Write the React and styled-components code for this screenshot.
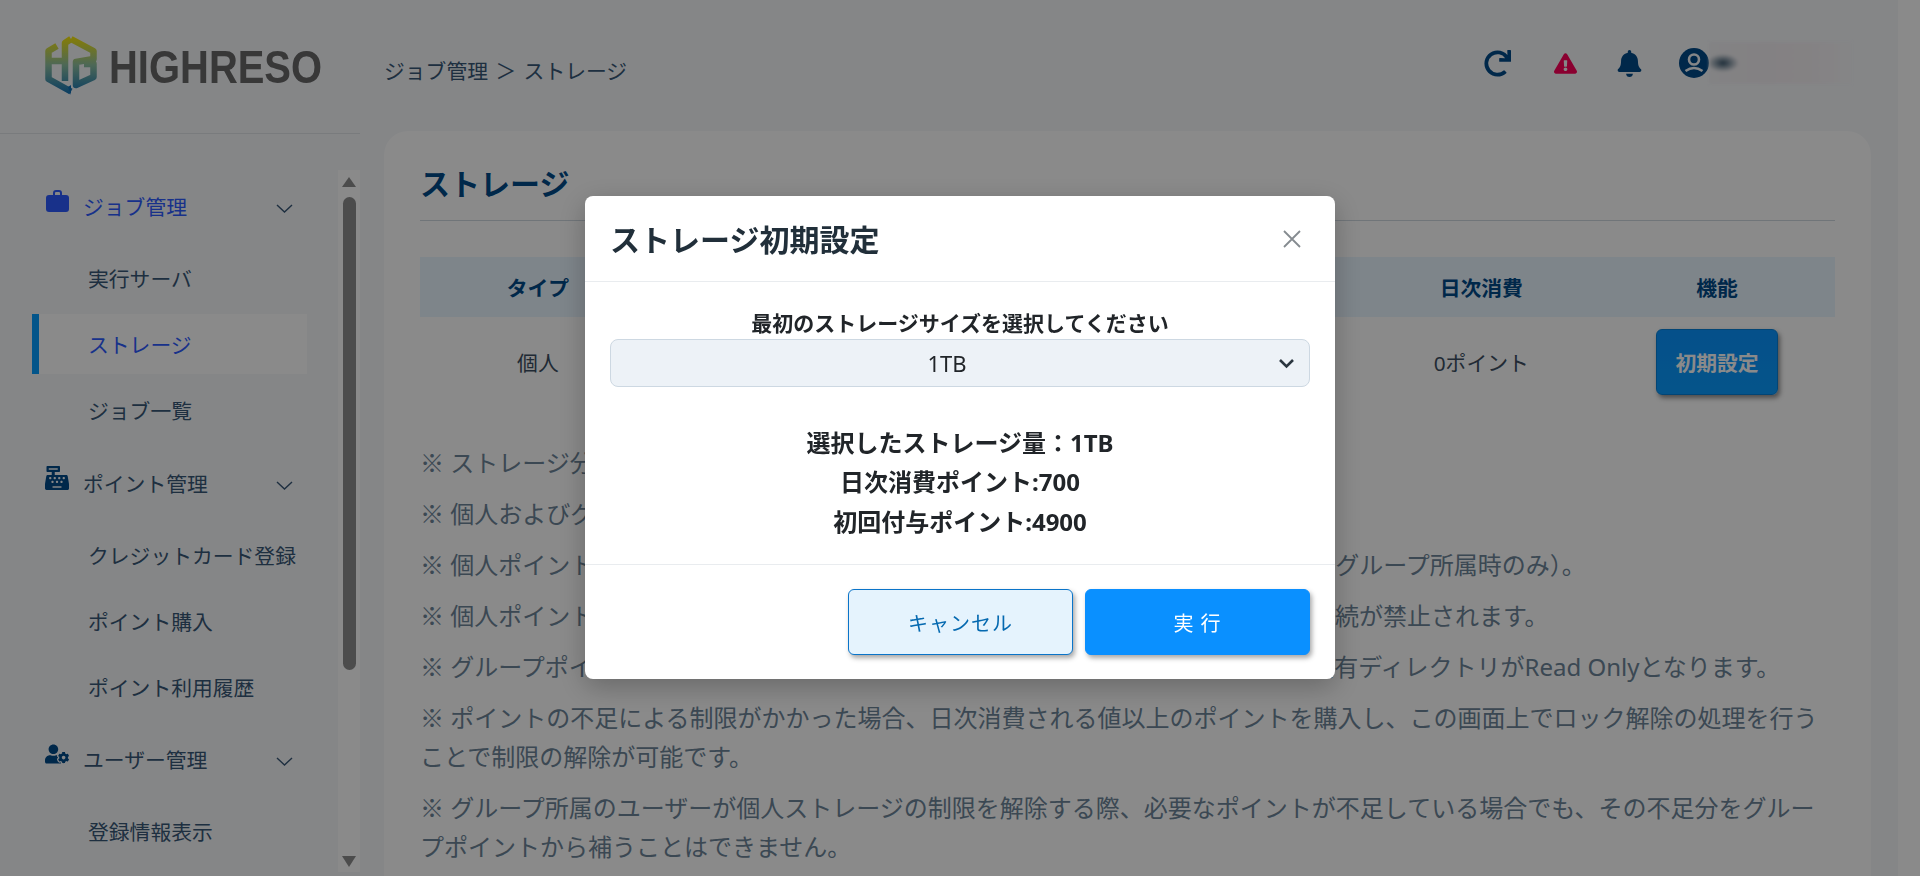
import React from 'react';
import styled, { createGlobalStyle } from 'styled-components';
import { FaRedo, FaExclamationTriangle, FaBell, FaCashRegister, FaUserCog } from 'react-icons/fa';

const GlobalStyle = createGlobalStyle`
  html, body {
    margin: 0;
    height: 100%;
    overflow: hidden;
    background: #f5f7fa;
    font-family: "Noto Sans", "Noto Sans CJK JP", sans-serif;
  }
  * {
    box-sizing: border-box;
  }
`;

const Shell = styled.div`
  display: flex;
  height: 876px;
  overflow: hidden;
`;

const LeftColumn = styled.div`
  display: flex;
  flex-direction: column;
  flex: 0 0 360px;
`;

const LogoBar = styled.div`
  display: flex;
  align-items: center;
  height: 134px;
  padding: 0 0 4px 45px;
  border-bottom: 1px solid #dfe3e8;
`;

const LogoText = styled.span`
  margin: 4px 0 0 12px;
  font-family: "Liberation Sans", sans-serif;
  font-size: 47px;
  font-weight: 700;
  color: #686868;
  transform: scaleX(0.85);
  transform-origin: left center;
`;

const SideBody = styled.div`
  display: flex;
  flex: 1;
  min-height: 0;
`;

const Nav = styled.nav`
  display: flex;
  flex-direction: column;
  flex: 0 0 338px;
  padding-top: 39px;
`;

const GroupRow = styled.div`
  display: flex;
  align-items: center;
  flex: 0 0 66px;
  margin: ${p => p.$top || 0}px 0 6px;
  padding: 0 45px;
  font-size: 20.8px;
  color: ${p => (p.$active ? '#2e5cff' : '#385776')};
`;

const GroupIcon = styled.span`
  display: flex;
  justify-content: center;
  flex: 0 0 24px;
  margin: 0 14px 10px 0;
  font-size: 24px;
  color: ${p => (p.$active ? '#2e5cff' : '#004a89')};
`;

const GroupLabel = styled.span`
  flex: 1;
`;

const Chevron = styled.svg`
  width: 17px;
  height: 9px;
  margin-top: 4px;
  fill: none;
  stroke: #385776;
  stroke-width: 1.4;
`;

const SubItem = styled.div`
  display: flex;
  align-items: center;
  flex: 0 0 60px;
  width: 275px;
  margin: 3px 0 3px 32px;
  padding-left: 49px;
  border-left: 7px solid ${p => (p.$active ? '#079eff' : 'transparent')};
  background: ${p => (p.$active ? '#ffffff' : 'transparent')};
  font-size: 20.8px;
  color: ${p => (p.$active ? '#2e5cff' : '#385776')};
`;

const ScrollTrack = styled.div`
  display: flex;
  flex-direction: column;
  align-items: center;
  flex: 0 0 22px;
  margin: 36px 0 4px;
  background: #ffffff;
`;

const ArrowUp = styled.div`
  margin: 7px 0 10px;
  border-left: 7px solid transparent;
  border-right: 7px solid transparent;
  border-bottom: 10px solid #8d8d8d;
`;

const ArrowDown = styled.div`
  margin: auto 0 5px;
  border-left: 7px solid transparent;
  border-right: 7px solid transparent;
  border-top: 11px solid #8d8d8d;
`;

const ScrollThumb = styled.div`
  width: 13px;
  height: 473px;
  border-radius: 7px;
  background: #8d8d8d;
`;

const RightColumn = styled.div`
  display: flex;
  flex-direction: column;
  flex: 0 0 1538px;
`;

const PageStrip = styled.div`
  flex: 1;
  background: #ffffff;
`;

const TopBar = styled.header`
  display: flex;
  align-items: center;
  flex: 0 0 131px;
  padding: 0 46px 0 24px;
`;

const Breadcrumb = styled.div`
  padding-top: 9px;
  font-size: 20.8px;
  word-spacing: 2px;
  color: #385776;
`;

const TopIcons = styled.div`
  display: flex;
  align-items: center;
  margin-left: auto;
  padding-bottom: 5px;
`;

const IconSlot = styled.span`
  display: flex;
  justify-content: center;
  width: 66px;
  padding-left: ${p => p.$nudge || 0}px;
  font-size: ${p => p.$size}px;
  color: ${p => p.$color || '#004a89'};
`;

const AvatarIcon = styled.svg`
  flex: 0 0 30px;
  width: 30px;
  height: 30px;
  margin-left: 17px;
`;

const BlurredName = styled.div`
  width: 143px;
  height: 42px;
  background:
    radial-gradient(ellipse 16px 9px at 14px 50%, #35536a 0, #5c7f9600 100%),
    linear-gradient(90deg, #f2f2f4, #f3eef2 40%, #f4f0f3 70%, #f5f6f8);
  filter: blur(1.5px);
`;

const Card = styled.main`
  flex: 1;
  margin: 0 27px 0 24px;
  padding: 31px 36px 0;
  border-radius: 24px 24px 0 0;
  background: #ffffff;
`;

const PageTitle = styled.h1`
  margin: 0 0 36px;
  padding-bottom: 14px;
  border-bottom: 1px solid #cfd8e0;
  font-size: 30px;
  line-height: 44px;
  font-weight: 700;
  color: #004a89;
`;

const TableRow = styled.div`
  display: grid;
  grid-template-columns: repeat(6, 1fr);
  align-items: center;
  height: ${p => (p.$head ? '60px' : '90px')};
  text-align: center;
  font-size: 20.8px;
  font-weight: ${p => (p.$head ? 700 : 400)};
  color: ${p => (p.$head ? '#004a89' : '#3d4f62')};
  background: ${p => (p.$head ? '#e9f5ff' : 'transparent')};
`;

const SetupButton = styled.button`
  justify-self: center;
  width: 122px;
  height: 66px;
  padding: 0;
  border: 1px solid #0780d8;
  border-radius: 6px;
  background: linear-gradient(#0a94ff, #0a9cff);
  box-shadow: 2px 3px 5px rgba(0, 0, 0, 0.45);
  font-family: inherit;
  font-size: 20.8px;
  font-weight: 700;
  color: #ffffff;
`;

const Notes = styled.div`
  margin-top: 36px;
`;

const Note = styled.p`
  margin: 0 0 12px;
  font-size: 24px;
  line-height: 39px;
  color: #6d8599;
`;

const NoteMark = styled.span`
  font-family: "Noto Sans CJK JP", sans-serif;
  line-height: 1;
`;

const Backdrop = styled.div`
  position: fixed;
  inset: 0;
  background: rgba(0, 0, 0, 0.46);
`;

const DialogWrap = styled.div`
  position: fixed;
  inset: 0;
  display: flex;
  justify-content: center;
  align-items: flex-start;
  padding-top: 196px;
`;

const Dialog = styled.div`
  width: 750px;
  border-radius: 8px;
  background: #ffffff;
  box-shadow: 0 8px 28px rgba(0, 0, 0, 0.25);
  color: #212529;
`;

const DialogHead = styled.div`
  display: flex;
  align-items: center;
  justify-content: space-between;
  height: 86px;
  padding: 0 34px 0 25px;
  border-bottom: 1px solid #e9ecef;
`;

const DialogTitle = styled.h2`
  margin: 0;
  padding-bottom: 2px;
  font-size: 30px;
  font-weight: 700;
  color: #212f3a;
`;

const CloseIcon = styled.svg`
  width: 18px;
  height: 18px;
  stroke: #858b90;
  stroke-width: 1.8;
`;

const DialogBody = styled.div`
  padding: 28px 25px 23px;
  border-bottom: 1px solid #e9ecef;
  text-align: center;
`;

const FieldLabel = styled.div`
  height: 29px;
  font-size: 21px;
  line-height: 27px;
  font-weight: 700;
`;

const SelectWrap = styled.div`
  position: relative;
`;

const SizeSelect = styled.select`
  display: block;
  width: 100%;
  height: 48px;
  padding: 0 26px 0 0;
  appearance: none;
  border: 1px solid #cdd8e2;
  border-radius: 8px;
  background: #edf2f7;
  font-family: inherit;
  font-size: 22px;
  text-align: center;
  color: #212529;
`;

const SelectCaret = styled.svg`
  position: absolute;
  top: 19px;
  right: 15px;
  width: 17px;
  height: 11px;
  fill: none;
  stroke: #2b3640;
  stroke-width: 2.6;
  pointer-events: none;
`;

const Summary = styled.div`
  margin-top: 36px;
  font-size: 24px;
  line-height: 39.4px;
  font-weight: 700;
`;

const DialogFoot = styled.div`
  display: flex;
  justify-content: flex-end;
  gap: 12px;
  padding: 24px 25px;
`;

const FootButton = styled.button`
  width: 225px;
  height: 66px;
  padding: 0;
  border: 1px solid ${p => (p.$primary ? '#0b8fff' : '#0a74c9')};
  border-radius: 6px;
  background: ${p => (p.$primary ? '#0a90ff' : '#e5f3fd')};
  box-shadow: 2px 3px 5px rgba(0, 0, 0, 0.35);
  font-family: inherit;
  font-size: 20px;
  letter-spacing: 1px;
  color: ${p => (p.$primary ? '#ffffff' : '#0569b0')};
`;

const notes = [
  'ストレージ分のポイントは毎日消費されます。',
  '個人およびグループのポイントは別々に管理されます。',
  '個人ポイントは個人ストレージ、グループポイントは共有ストレージに使います（グループ所属時のみ）。',
  '個人ポイントの不足により制限がかかった場合、すべての実行サーバーへの新規接続が禁止されます。',
  'グループポイントの不足により制限がかかった場合、対象となるグループ全体の共有ディレクトリがRead Onlyとなります。',
  'ポイントの不足による制限がかかった場合、日次消費される値以上のポイントを購入し、この画面上でロック解除の処理を行うことで制限の解除が可能です。',
  'グループ所属のユーザーが個人ストレージの制限を解除する際、必要なポイントが不足している場合でも、その不足分をグループポイントから補うことはできません。',
];

const LogoMark = () => (
  <svg width="52" height="60" viewBox="0 0 52 60" fill="none">
    <defs>
      <linearGradient id="logoFade" gradientUnits="userSpaceOnUse" x1="0" y1="0" x2="0" y2="60">
        <stop offset="0" stopColor="#ffea00" />
        <stop offset="0.5" stopColor="#8fc0a0" />
        <stop offset="1" stopColor="#0f6fb5" />
      </linearGradient>
    </defs>
    <g stroke="url(#logoFade)" strokeWidth="6.5" strokeLinejoin="round">
      <path d="M12 11 L3.5 16 V44 L26 56.5" />
      <path d="M3.5 26 H20 M26 4 L20 8 V46" />
      <path d="M26 4 L48.5 16 V24 L31 27 V50 L48.5 42 V29 H39" />
    </g>
    <path d="M23 52 L26 60 L26 50 Z" fill="#0f6fb5" />
  </svg>
);

const Briefcase = () => (
  <svg width="23" height="22" viewBox="0 0 23 22" fill="currentColor">
    <path d="M7 6 V3 a3 3 0 0 1 3 -3 h3 a3 3 0 0 1 3 3 v3 h-2 V3 a1 1 0 0 0 -1 -1 h-3 a1 1 0 0 0 -1 1 v3 Z" />
    <rect x="0" y="5" width="23" height="17" rx="3" />
  </svg>
);

const Avatar = () => (
  <AvatarIcon viewBox="0 0 30 30" fill="none">
    <circle cx="15" cy="15" r="15" fill="#004a89" />
    <circle cx="15" cy="11.5" r="5" stroke="#f5f7fa" strokeWidth="2.6" />
    <path d="M6.5 23 Q15 17 23.5 23" stroke="#f5f7fa" strokeWidth="2.6" />
  </AvatarIcon>
);

const Down = () => (
  <Chevron viewBox="0 0 17 9">
    <path d="M1 1 L8.5 8 L16 1" />
  </Chevron>
);

const App = () => (
  <>
    <GlobalStyle />
    <Shell>
      <LeftColumn>
        <LogoBar>
          <LogoMark />
          <LogoText>HIGHRESO</LogoText>
        </LogoBar>
        <SideBody>
          <Nav>
            <GroupRow $active>
              <GroupIcon $active><Briefcase /></GroupIcon>
              <GroupLabel>ジョブ管理</GroupLabel>
              <Down />
            </GroupRow>
            <SubItem>実行サーバ</SubItem>
            <SubItem $active>ストレージ</SubItem>
            <SubItem>ジョブ一覧</SubItem>
            <GroupRow $top={7}>
              <GroupIcon><FaCashRegister /></GroupIcon>
              <GroupLabel>ポイント管理</GroupLabel>
              <Down />
            </GroupRow>
            <SubItem>クレジットカード登録</SubItem>
            <SubItem>ポイント購入</SubItem>
            <SubItem>ポイント利用履歴</SubItem>
            <GroupRow $top={6}>
              <GroupIcon><FaUserCog /></GroupIcon>
              <GroupLabel>ユーザー管理</GroupLabel>
              <Down />
            </GroupRow>
            <SubItem>登録情報表示</SubItem>
          </Nav>
          <ScrollTrack>
            <ArrowUp />
            <ScrollThumb />
            <ArrowDown />
          </ScrollTrack>
        </SideBody>
      </LeftColumn>
      <RightColumn>
        <TopBar>
          <Breadcrumb>ジョブ管理 ＞ ストレージ</Breadcrumb>
          <TopIcons>
            <IconSlot $size={27}><FaRedo /></IconSlot>
            <IconSlot $size={23} $nudge={4} $color="#ff0059"><FaExclamationTriangle /></IconSlot>
            <IconSlot $size={27}><FaBell /></IconSlot>
            <Avatar />
            <BlurredName />
          </TopIcons>
        </TopBar>
        <Card>
          <PageTitle>ストレージ</PageTitle>
          <TableRow $head>
            <span>タイプ</span>
            <span>状態</span>
            <span>容量</span>
            <span>使用量</span>
            <span>日次消費</span>
            <span>機能</span>
          </TableRow>
          <TableRow>
            <span>個人</span>
            <span>未設定</span>
            <span>0TB</span>
            <span>0GB</span>
            <span>0ポイント</span>
            <SetupButton>初期設定</SetupButton>
          </TableRow>
          <Notes>
            {notes.map(text => (
              <Note key={text}><NoteMark>※</NoteMark> {text}</Note>
            ))}
          </Notes>
        </Card>
      </RightColumn>
      <PageStrip />
    </Shell>
    <Backdrop />
    <DialogWrap>
      <Dialog>
        <DialogHead>
          <DialogTitle>ストレージ初期設定</DialogTitle>
          <CloseIcon viewBox="0 0 18 18">
            <path d="M1 1 L17 17 M17 1 L1 17" />
          </CloseIcon>
        </DialogHead>
        <DialogBody>
          <FieldLabel>最初のストレージサイズを選択してください</FieldLabel>
          <SelectWrap>
            <SizeSelect defaultValue="1TB">
              <option>1TB</option>
              <option>2TB</option>
              <option>5TB</option>
            </SizeSelect>
            <SelectCaret viewBox="0 0 17 11">
              <path d="M2 2 L8.5 8.5 L15 2" />
            </SelectCaret>
          </SelectWrap>
          <Summary>
            <div>選択したストレージ量：1TB</div>
            <div>日次消費ポイント:700</div>
            <div>初回付与ポイント:4900</div>
          </Summary>
        </DialogBody>
        <DialogFoot>
          <FootButton>キャンセル</FootButton>
          <FootButton $primary>実 行</FootButton>
        </DialogFoot>
      </Dialog>
    </DialogWrap>
  </>
);

export default App;
